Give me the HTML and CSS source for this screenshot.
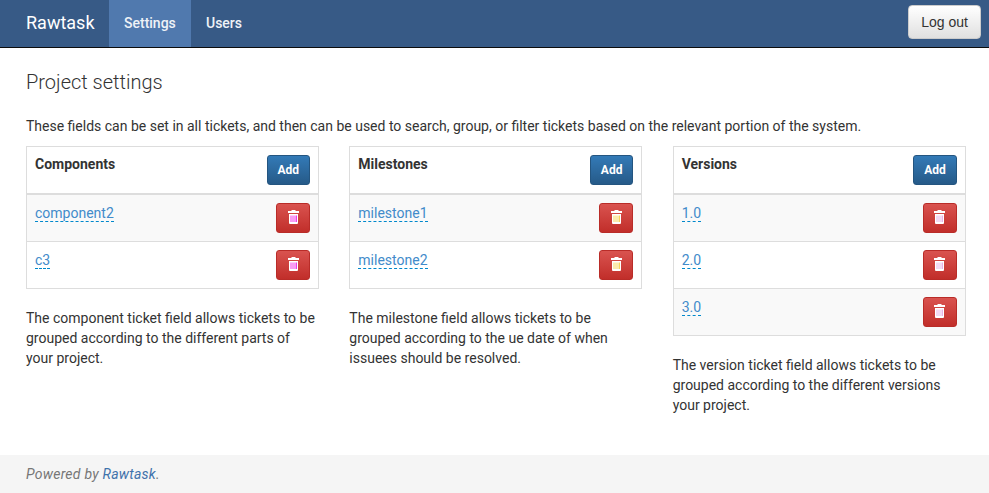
FILE: index.html
```html
<!DOCTYPE html>
<html lang="en">
<head>
<meta charset="utf-8">
<title>Rawtask</title>
<link rel="stylesheet" href="styles.css">
</head>
<body>
<svg class="defs" width="0" height="0" aria-hidden="true">
  <defs>
    <symbol id="trash" viewBox="0 0 11 14">
      <path fill="#fff" d="M3.800 0h3.400l.6 1H11v2H0V1h3.200zM1 4h9v9a1 1 0 0 1-1 1H2a1 1 0 0 1-1-1z"/>
      <path class="stripe" d="M2.500 5.500h1v6.500h-1zM4.500 5.500h1v6.500h-1zM6.500 5.500h1v6.500h-1zM8 5.500h1v6.500h-1z"/>
    </symbol>
  </defs>
</svg>
<nav class="navbar">
  <a class="brand" href="#">Rawtask</a>
  <a class="nav-link active" href="#">Settings</a>
  <a class="nav-link" href="#">Users</a>
  <button class="btn-logout" type="button">Log out</button>
</nav>
<main class="content">
  <h1 class="title">Project settings</h1>
  <p class="intro">These fields can be set in all tickets, and then can be used to search, group, or filter tickets based on the relevant portion of the system.</p>
  <div class="columns">
    <section class="magenta">
      <div class="panel">
        <div class="row head"><strong>Components</strong><button class="btn-add" type="button">Add</button></div>
        <div class="row odd"><a class="editable" href="#">component2</a><button class="btn-del" type="button" aria-label="Delete"><svg class="ico"><use href="#trash"/></svg></button></div>
        <div class="row"><a class="editable" href="#">c3</a><button class="btn-del" type="button" aria-label="Delete"><svg class="ico"><use href="#trash"/></svg></button></div>
      </div>
      <p class="note">The component ticket field allows tickets to be grouped according to the different parts of your project.</p>
    </section>
    <section class="yellow">
      <div class="panel">
        <div class="row head"><strong>Milestones</strong><button class="btn-add" type="button">Add</button></div>
        <div class="row odd"><a class="editable" href="#">milestone1</a><button class="btn-del" type="button" aria-label="Delete"><svg class="ico"><use href="#trash"/></svg></button></div>
        <div class="row"><a class="editable" href="#">milestone2</a><button class="btn-del" type="button" aria-label="Delete"><svg class="ico"><use href="#trash"/></svg></button></div>
      </div>
      <p class="note">The milestone field allows tickets to be grouped according to the ue date of when issuees should be resolved.</p>
    </section>
    <section class="pink">
      <div class="panel">
        <div class="row head"><strong>Versions</strong><button class="btn-add" type="button">Add</button></div>
        <div class="row odd"><a class="editable" href="#">1.0</a><button class="btn-del" type="button" aria-label="Delete"><svg class="ico"><use href="#trash"/></svg></button></div>
        <div class="row"><a class="editable" href="#">2.0</a><button class="btn-del" type="button" aria-label="Delete"><svg class="ico"><use href="#trash"/></svg></button></div>
        <div class="row odd"><a class="editable" href="#">3.0</a><button class="btn-del" type="button" aria-label="Delete"><svg class="ico"><use href="#trash"/></svg></button></div>
      </div>
      <p class="note">The version ticket field allows tickets to be grouped according to the different versions your project.</p>
    </section>
  </div>
</main>
<footer class="footer"><em>Powered by <a href="#">Rawtask</a>.</em></footer>
</body>
</html>
```
FILE: styles.css
```css
* { box-sizing: border-box; }
html, body { margin: 0; height: 493px; overflow: hidden; }
body { display: flex; flex-direction: column; font: 14px/20px Roboto, sans-serif; color: #333; background: #fff; }
.defs { position: absolute; }
a { color: #337ab7; text-decoration: none; }
.navbar { display: flex; align-items: stretch; height: 48px; flex: none; padding-left: 11px; background: #375a86; border-bottom: 1px solid #0c0c0c; }
.brand { width: 98px; padding: 13px 0 0 15px; font-size: 18px; font-weight: 400; color: #fff; }
.nav-link { padding: 13px 15px 0; font-weight: 500; color: #eef2f7; }
.nav-link.active { width: 82px; background: #5079ae; }
.btn-logout { margin: 5px 8px 0 auto; width: 73px; height: 34px; padding: 0; font: 14px "Liberation Sans", sans-serif; color: #333; border: 1px solid #ccc; border-radius: 4px; background: linear-gradient(#fff, #e0e0e0); }
.content { flex: 1; padding: 0 23px 0 26px; }
.title { margin: 21px 0 0; font-size: 20px; font-weight: 300; line-height: 26px; color: #333; }
.intro { margin: 21px 0 0; color: #333; }
.columns { display: grid; grid-template-columns: repeat(3, 293px); column-gap: 30.330px; margin-top: 10px; }
.magenta { --stripe: #f03ae8; }
.yellow { --stripe: #f6d65c; }
.pink { --stripe: #e6b4e6; }
.stripe { fill: var(--stripe); }
.panel { border: 1px solid #ddd; }
.row { display: flex; justify-content: space-between; align-items: flex-start; height: 47px; padding: 8px 8px 0; border-bottom: 1px solid #ddd; }
.row:last-child { height: 46px; border-bottom: 0; }
.row.head { height: 48px; border-bottom: 2px solid #ddd; }
.row.odd { background: #f9f9f9; }
.row strong { font-weight: 700; margin-top: -1px; }
.editable { margin-top: 2px; font-size: 14px; color: #428bca; border-bottom: 1px dashed #08c; line-height: 16px; }
.btn-add { width: 43.400px; height: 30px; padding: 0; font: 700 12px Roboto, sans-serif; color: #fff; border: 1px solid #245580; border-radius: 3px; background: linear-gradient(#337ab7, #265a88); }
.btn-del { display: flex; align-items: center; justify-content: center; width: 34px; height: 30px; padding: 0 0 2px; color: #fff; border: 1px solid #b92c28; border-radius: 3px; background: linear-gradient(#d9534f, #c12e2a); }
.ico { width: 11px; height: 14px; }
.note { margin: 19px 0 0; line-height: 20px; }
.footer { flex: none; height: 38px; padding: 9px 26px 0; background: #f5f5f5; color: #777; letter-spacing: .25px; }
.footer a { color: #3f72ab; }
```
